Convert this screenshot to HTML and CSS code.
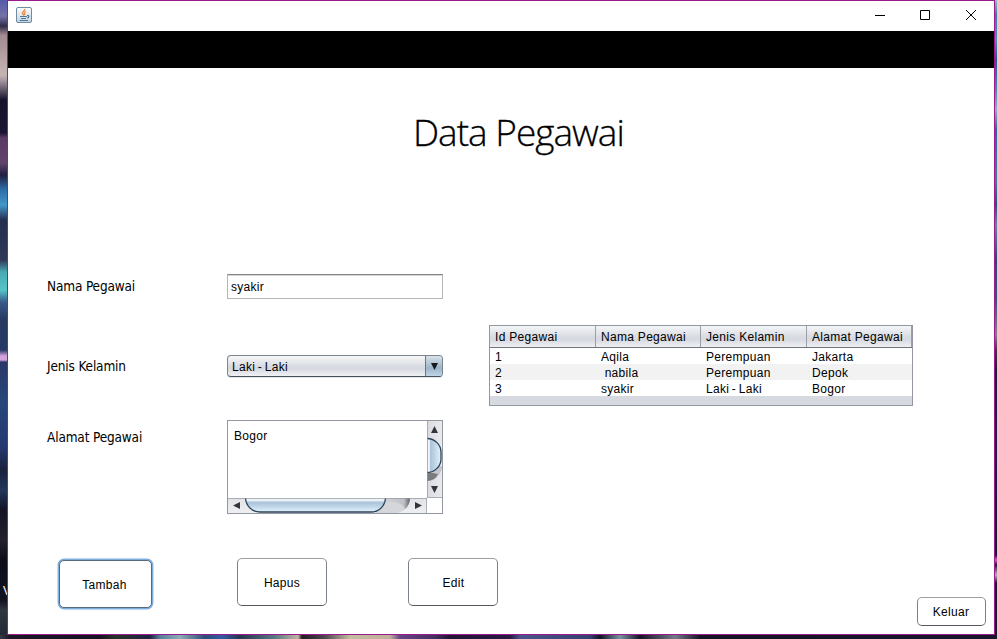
FILE: index.html
```html
<!DOCTYPE html>
<html lang="id">
<head>
<meta charset="utf-8">
<title>Data Pegawai</title>
<link rel="stylesheet" href="styles.css">
</head>
<body>
<div class="desktop">
  <div class="wall-left"><span class="desk-label">V</span></div>
  <div class="window">
    <header class="titlebar">
      <svg class="java" width="16" height="16" viewBox="0 0 16 16">
        <defs><linearGradient id="ji" x1="0" y1="0" x2="0" y2="1"><stop offset="0" stop-color="#fdfdfd"/><stop offset="1" stop-color="#c3d5e2"/></linearGradient></defs>
        <rect x=".5" y=".5" width="15" height="15" rx="1.5" fill="url(#ji)" stroke="#6f8ba1"/>
        <path d="M9 2C9 4 6 4.500 6.500 6.500L8 8.500M10 4.500C8 5.500 8 6 9 8" fill="none" stroke="#e8883a" stroke-width="1.300"/>
        <path d="M4 9.500H11M5 11.500H10M3.500 13.500H12M11 8.500C13.500 8 13.500 10.500 11 11" fill="none" stroke="#4f7997" stroke-width="1.200"/>
      </svg>
      <svg class="controls" width="102" height="12" viewBox="0 0 102 12" fill="none" stroke="#000">
        <path d="M0 6.500H10M45.500 1.500H54.500V10.500H45.500Z"/>
        <path d="M91 1L101 11M101 1L91 11"/>
      </svg>
    </header>
    <div class="banner"></div>
    <main class="content">
      <h1>Data Pegawai</h1>
      <div class="body">
        <section class="form">
          <label class="l1">Nama Pegawai</label>
          <div class="field">syakir</div>
          <label class="l2">Jenis Kelamin</label>
          <div class="combo"><span class="tight">Laki - Laki</span><i><svg width="7" height="7"><path d="M0 0H7L3.500 7Z" fill="#161b20"/></svg></i></div>
          <label class="l3">Alamat Pegawai</label>
          <div class="area">
            <div class="text">Bogor</div>
            <svg class="vbar" width="15" height="77" viewBox="0 0 15 77">
              <defs>
                <linearGradient id="tv"><stop offset="0" stop-color="#d9dbe2"/><stop offset="1" stop-color="#e9eaee"/></linearGradient>
                <linearGradient id="th"><stop offset="0" stop-color="#f7fafc"/><stop offset=".18" stop-color="#e6eef5"/><stop offset=".22" stop-color="#abc2d8"/><stop offset=".55" stop-color="#bfd5e7"/><stop offset="1" stop-color="#e2f3fc"/></linearGradient>
              </defs>
              <rect width="15" height="77" fill="url(#tv)"/>
              <path d="M0 45V60Q11 60 15 48V45Z" fill="#c5c7cd"/>
              <path d="M0 51V60Q8 60 11 53Z" fill="#606164" opacity=".75"/>
              <path d="M0 17.500C8 17.500 14 24 14 31V38C14 45 8 51.500 0 51.500Z" fill="url(#th)"/>
              <path d="M0 17.500C8 17.500 14 24 14 31V38C14 45 8 51.500 0 51.500" fill="none" stroke="#2b4358" stroke-width="1.300"/>
              <path d="M4 12H11L7.500 5ZM4 65H11L7.500 72Z" fill="#323438"/>
              <path d="M.5 0V77M0 76.500H15" stroke="#9297a1" opacity=".7"/>
            </svg>
            <svg class="hbar" width="199" height="15" viewBox="0 0 199 15">
              <defs>
                <linearGradient id="hh" x2="0" y2="1"><stop offset="0" stop-color="#f7fafc"/><stop offset=".2" stop-color="#e6eef5"/><stop offset=".3" stop-color="#abc2d8"/><stop offset=".6" stop-color="#bfd5e7"/><stop offset="1" stop-color="#e2f3fc"/></linearGradient>
                <linearGradient id="hs"><stop offset="0" stop-color="#d0d2d9"/><stop offset=".75" stop-color="#bfc1c7"/><stop offset="1" stop-color="#606164"/></linearGradient>
                <linearGradient id="ht" x2="0" y2="1"><stop offset="0" stop-color="#e0e2e7"/><stop offset="1" stop-color="#eeeff2"/></linearGradient>
              </defs>
              <rect width="199" height="15" fill="url(#ht)"/>
              <path d="M152 0H182Q181 12 170 15H148Z" fill="#d4d6dc"/>
              <path d="M157 0H182Q182 7 177 11Q173 2 157 4Z" fill="url(#hs)"/>
              <path d="M17.500 0C18 8 24 14 32 14H143C151 14 157 8 157.500 0Z" fill="url(#hh)"/>
              <path d="M17.500 0C18 8 24 14 32 14H143C151 14 157 8 157.500 0" fill="none" stroke="#2b4358" stroke-width="1.300"/>
              <path d="M12 4V11L5 7.500ZM187 4V11L194 7.500Z" fill="#323438"/>
              <path d="M0 .5H199M198.500 0V15" stroke="#9297a1" fill="none" opacity=".7"/>
            </svg>
          </div>
        </section>
        <div class="table">
          <div class="row head"><span>Id Pegawai</span><span>Nama Pegawai</span><span>Jenis Kelamin</span><span>Alamat Pegawai</span></div>
          <div class="row"><span>1</span><span>Aqila</span><span>Perempuan</span><span>Jakarta</span></div>
          <div class="row odd"><span>2</span><span>&nbsp;nabila</span><span>Perempuan</span><span>Depok</span></div>
          <div class="row"><span>3</span><span>syakir</span><span class="tight">Laki - Laki</span><span>Bogor</span></div>
        </div>
      </div>
      <footer class="actions">
        <button class="primary">Tambah</button>
        <button class="hapus">Hapus</button>
        <button class="edit">Edit</button>
        <button class="exit">Keluar</button>
      </footer>
    </main>
  </div>
  <div class="wall-right"></div>
  <div class="wall-bottom"></div>
</div>
</body>
</html>
```

FILE: styles.css
```css
* { box-sizing: border-box; }
body { margin: 0; overflow: hidden; font: 12px/16px "Liberation Sans", sans-serif; color: #000; letter-spacing: .3px; }
svg { display: block; }
.desktop { display: grid; grid-template-columns: 7px 988px 2px; grid-template-rows: 635px 4px; width: 997px; height: 639px; }
.wall-left { overflow: hidden; background: linear-gradient(#545aa8 0, #7671aa 16px, #312d4a 26px, #a18b91 35px, #c5b4b4 75px, #a99aa3 80px, #16122c 100px, #1b1533 133px, #5b3b66 138px, #62426d 163px, #211f40 175px, #2f6ea9 190px, #4397c9 205px, #252e50 220px, #303855 260px, #4ba9b4 272px, #55c5c7 290px, #385b8a 302px, #27395f 320px, #243967 350px, #d5a3dc 356px, #d5a3dc 360px, #2a3768 362px, #26477a 400px, #253974 445px, #1a213d 470px, #21375c 490px, #141426 510px, #24202b 540px, #0d0d1a 560px, #121321 600px, #30363f 610px, #242b36 635px); }
.desk-label { display: block; margin: 583px 0 0 3px; color: #fff; }
.wall-right { background: linear-gradient(#82c5cc 0, #397ca8 15px, #518bb8 40px, #27588a 60px, #4a87b4 90px, #8bb1c8 110px, #2d659a 130px, #4778a5 180px, #255083 205px, #6386a8 225px, #2b4773 260px, #36527c 300px, #877d88 335px, #4b3041 350px, #1b1a36 370px, #221943 440px, #15152e 555px, #e356b8 560px, #1b1b33 565px, #bcaeb3 575px, #17162d 583px, #17162d 635px); }
.wall-bottom { grid-column: 1 / 4; background: linear-gradient(90deg, #333d46 0, #191824 10px, #151323 100px, #263329 115px, #202442 150px, #57809a 160px, #8badb6 180px, #2c4d79 205px, #3559a4 222px, #25354e 240px, #577a82 275px, #c2b49f 298px, #211c24 302px, #4d4750 325px, #c3bea0 350px, #c0af9a 390px, #674385 400px, #44305f 435px, #211435 450px, #281b43 510px, #4a5589 520px, #35416f 590px, #101326 600px, #7894a0 620px, #141326 640px, #747989 675px, #151426 700px, #17162b 997px); }
.window { display: flex; flex-direction: column; background: #fff; border: 1px solid #9b1b8d; }
.titlebar { height: 30px; display: flex; justify-content: space-between; padding: 6px 17px 0 8px; }
.controls { margin-top: 2px; }
.banner { height: 37px; background: #000; }
.content { flex: 1; padding-left: 39px; }
h1 { margin: 39px 0 0 366px; height: 50px; font: 300 37px/50px "Open Sans", sans-serif; letter-spacing: -1px; -webkit-text-stroke: .3px #000; white-space: nowrap; }
.body { display: flex; gap: 46px; padding-top: 117px; height: 401px; }
.form { display: grid; grid-template-columns: 180px 216px; grid-template-rows: 81px 65px 94px; align-items: start; align-content: start; }
label { font: 13.500px/18px "DejaVu Sans Condensed", "Open Sans", sans-serif; letter-spacing: -.15px; white-space: nowrap; }
.l1 { margin-top: 3px; }
.l2 { margin-top: 2px; }
.l3 { margin-top: 8px; }
.field { height: 25px; padding: 4px 3px; border: 1px solid #b5b6ba; border-top-color: #858589; box-shadow: inset 0 1px #d3d4d6; }
.combo { display: flex; height: 22px; border: 1px solid #7c858e; border-bottom-color: #44515c; border-radius: 4px; background: linear-gradient(#f6f7f8, #d9dce2 50%, #d5d8df 62%, #f0f1f4); box-shadow: 0 1px #e4e4e5; overflow: hidden; }
.combo span { flex: 1; padding: 3px 4px; }
.tight { word-spacing: -1px; }
.combo i { width: 17px; padding: 7px 0 0 5px; border-left: 1px solid #64798c; background: linear-gradient(#d7e1e9, #a9bed0 48%, #9cb4c9 60%, #bed5e7); }
.area { display: grid; grid-template-columns: 199px 15px; grid-template-rows: 77px 15px; height: 94px; border: 1px solid #9297a1; }
.text { padding: 7px 6px; }
.table { width: 424px; height: 81px; margin-top: 51px; border: 1px solid #9297a1; background: #d6d9e0; }
.row { display: grid; grid-template-columns: 106px 105px 106px 105px; height: 16px; background: #fff; white-space: nowrap; }
.row span { height: 16px; padding-left: 5px; line-height: 18px; }
.head { height: 22px; background: linear-gradient(#f5f6f8, #d9dce2 50%, #d6d9e0 65%, #eff0f3); border-bottom: 1px solid #70747d; }
.row.head span { padding-top: 3px; line-height: 16px; border-right: 1px solid #9a9ea7; height: 21px; }
.row.odd { background: #f2f2f2; }
.actions { display: flex; align-items: flex-start; padding: 0 8px 0 12px; }
button { padding: 1px 0 0; font: inherit; letter-spacing: inherit; color: #000; background: #fff; border: 1px solid #7b8188; border-top-color: #9da1a6; border-bottom-color: #55585f; border-radius: 5px; }
.primary { width: 93px; height: 48px; margin-top: 2px; padding-right: 2px; border-color: #59697c; box-shadow: 0 0 0 1.400px #7caedb; }
.hapus { width: 90px; height: 48px; margin-left: 85px; }
.edit { width: 90px; height: 48px; margin-left: 81px; padding-left: 1px; }
.exit { width: 69px; height: 29px; margin: 39px 0 0 auto; padding: 0 1px 0 0; }
```
